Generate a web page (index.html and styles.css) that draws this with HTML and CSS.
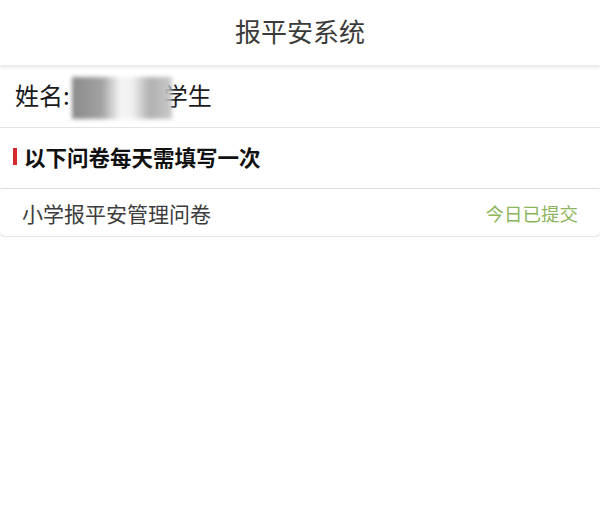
FILE: index.html
```html
<!DOCTYPE html>
<html lang="zh-CN">
<head>
  <meta charset="UTF-8">
  <title>报平安系统</title>
  <meta name="viewport" content="width=device-width, initial-scale=1.0">
  <link rel="stylesheet" href="styles.css">
</head>
<body>

  <header class="topbar">报平安系统</header>

  <div class="name-row">
    <span>姓名:</span><span class="mask"></span><span class="name-tail">学生</span>
  </div>

  <div class="section-title">
    <span class="bar"></span>以下问卷每天需填写一次
  </div>

  <div class="card">
    <span class="card-name">小学报平安管理问卷</span>
    <span class="card-status">今日已提交</span>
  </div>

</body>
</html>
```

FILE: styles.css
```css
/* Base */
body {
  font-family: "Noto Sans CJK SC", "Noto Sans", sans-serif;
  background-color: #fff;
  margin: 0;
  color: #222;
}

.topbar {
  height: 66px;
  box-sizing: border-box;
  padding-bottom: 4px;
  display: flex;
  align-items: center;
  justify-content: center;
  font-size: 26px;
  color: #3a3a3a;
  box-shadow: 0 2px 3px rgba(0, 0, 0, 0.08);
  border-bottom: 1px solid #ececec;
}

.name-row {
  height: 61px;
  box-sizing: border-box;
  padding: 0 0 5px 15px;
  margin-top: 1px;
  display: flex;
  align-items: center;
  font-size: 24px;
  color: #1a1a1a;
  border-bottom: 1px solid #e4e4e4;
}

.mask {
  display: inline-block;
  width: 100px;
  height: 42px;
  margin: 6px -8px 0 2px;
  position: relative;
  z-index: 1;
  background: linear-gradient(90deg, #7e7e7e 0%, #999 30%, #f4f4f4 48%, #f0f0f0 60%, #a8a8a8 78%, #c4c4c4 100%);
  filter: blur(2px);
  opacity: 0.9;
}

.section-title {
  height: 61px;
  box-sizing: border-box;
  padding: 0 0 3px 13px;
  display: flex;
  align-items: center;
  font-size: 21.5px;
  font-weight: 700;
  color: #111;
  border-bottom: 1px solid #e4e4e4;
}

.bar {
  display: inline-block;
  width: 4px;
  height: 17px;
  background-color: #d42a2a;
  margin-right: 7px;
}

.card {
  height: 48px;
  box-sizing: border-box;
  display: flex;
  align-items: center;
  justify-content: space-between;
  padding: 0 22px;
  border-radius: 6px;
  box-shadow: 0 1px 3px rgba(0, 0, 0, 0.12);
  border-bottom: 1px solid #e6e6e6;
}

.card-name {
  font-size: 21px;
  color: #3c3c3c;
}

.card-status {
  font-size: 18.5px;
  color: #8db55c;
}
```
